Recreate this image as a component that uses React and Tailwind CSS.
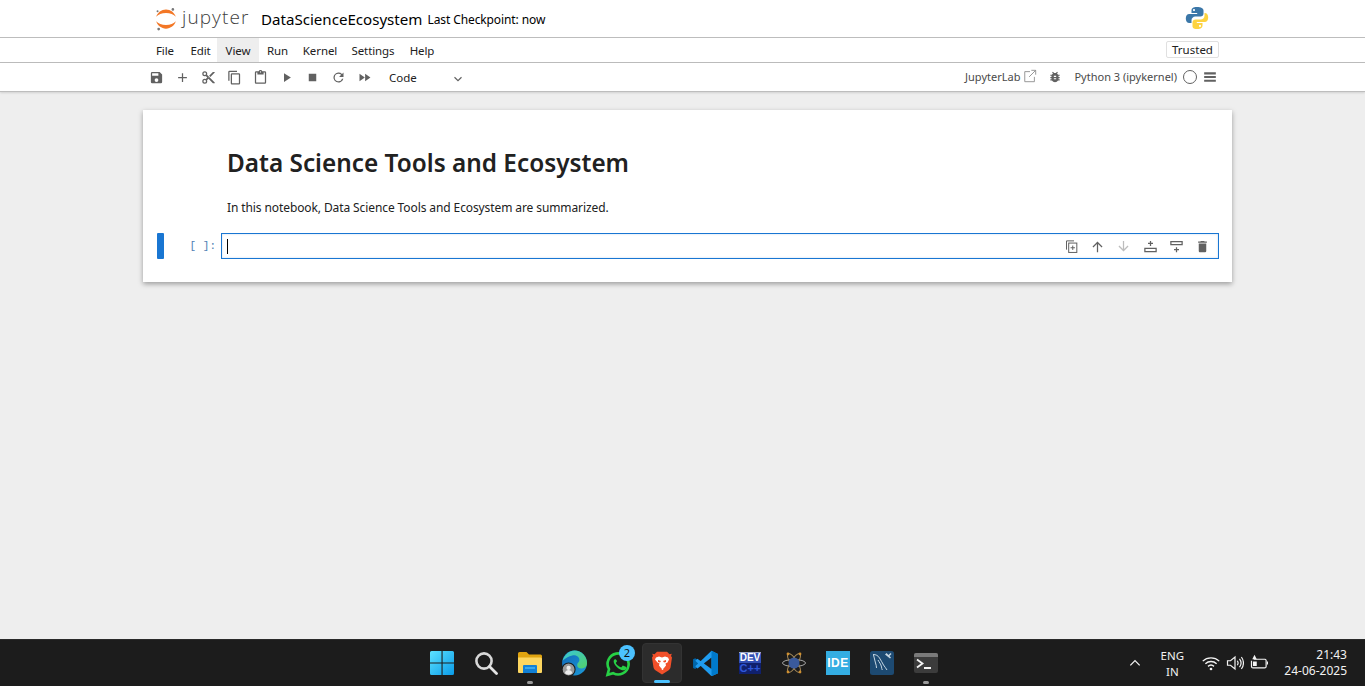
import React from "react";

const ui = { fontFamily: '"Noto Sans", "Open Sans", sans-serif' };

const Ic = ({ w = 16, h = 16, vb = "0 0 24 24", className = "", children }) => (
  <svg width={w} height={h} viewBox={vb} className={`shrink-0 ${className}`}>{children}</svg>
);

const toolIcons = [
  <path fill="#616161" d="M17 3H5a2 2 0 0 0-2 2v14a2 2 0 0 0 2 2h14a2 2 0 0 0 2-2V7l-4-4zm-5 16a3 3 0 1 1 0-6 3 3 0 0 1 0 6zm3-10H5V5h10v4z" />,
  <path fill="#616161" d="M19 13h-6v6h-2v-6H5v-2h6V5h2v6h6v2z" />,
  <path fill="#616161" d="M9.64 7.64A3.9 3.9 0 0 0 10 6a4 4 0 1 0-4 4c.59 0 1.14-.13 1.64-.36L10 12l-2.36 2.36A3.9 3.9 0 0 0 6 14a4 4 0 1 0 4 4c0-.59-.13-1.14-.36-1.64L12 14l7 7h3v-1L9.64 7.64zM6 8a2 2 0 1 1 0-4 2 2 0 0 1 0 4zm0 12a2 2 0 1 1 0-4 2 2 0 0 1 0 4zm6-7.5a.5.5 0 1 1 0-1 .5.5 0 0 1 0 1zM19 3l-6 6 2 2 7-7V3h-3z" />,
  <path fill="#616161" d="M16 1H4a2 2 0 0 0-2 2v14h2V3h12V1zm3 4H8a2 2 0 0 0-2 2v14c0 1.1.9 2 2 2h11a2 2 0 0 0 2-2V7a2 2 0 0 0-2-2zm0 16H8V7h11v14z" />,
  <path fill="#616161" d="M19 2h-4.18C14.4.84 13.3 0 12 0S9.6.84 9.18 2H5a2 2 0 0 0-2 2v16c0 1.1.9 2 2 2h14a2 2 0 0 0 2-2V4a2 2 0 0 0-2-2zm-7 0a1 1 0 1 1 0 2 1 1 0 0 1 0-2zm7 18H5V4h2v3h10V4h2v16z" />,
  <path fill="#616161" d="M8 5v14l11-7z" />,
  <path fill="#616161" d="M6 6h12v12H6z" />,
  <path fill="#616161" d="M17.65 6.35A8 8 0 1 0 19.73 14h-2.08A6 6 0 1 1 12 6c1.66 0 3.14.69 4.22 1.78L13 11h7V4l-2.35 2.35z" />,
  <path fill="#616161" d="M4 18l8.5-6L4 6v12zm9-12v12l8.5-6L13 6z" />,
];

const cellIcons = [
  <g key="dup" fill="none" stroke="#616161" strokeWidth="1.6"><path d="M16 3H4v14" /><rect x="7.5" y="6.5" width="13" height="15" /><path d="M14 10.500v7M10.500 14h7" /></g>,
  <path key="up" fill="#616161" d="M4 12l1.41 1.41L11 7.83V21h2V7.83l5.58 5.59L20 12l-8-8z" />,
  <path key="down" fill="#bdbdbd" d="M20 12l-1.41-1.41L13 16.17V3h-2v13.17l-5.58-5.59L4 12l8 8z" />,
  <g key="ia" fill="#616161"><path d="M2 14h20v7H2zm2 2v3h16v-3z" fillRule="evenodd" /><path d="M11 3h2v3h3v2h-3v3h-2V8H8V6h3z" /></g>,
  <g key="ib" fill="#616161"><path d="M2 3h20v7H2zm2 2v3h16V5z" fillRule="evenodd" /><path d="M11 13h2v3h3v2h-3v3h-2v-3H8v-2h3z" /></g>,
  <path key="del" fill="#616161" d="M6 19c0 1.1.9 2 2 2h8a2 2 0 0 0 2-2V7H6v12zM19 4h-3.5l-1-1h-5l-1 1H5v2h14V4z" />,
];

const menu = [
  ["File", "w-[38px]"], ["Edit", "w-[33px]"], ["View", "w-[42px] bg-[#eeeeee]"], ["Run", "w-[37px]"],
  ["Kernel", "w-[48px]"], ["Settings", "w-[58px]"], ["Help", "w-[40px]"],
];

const Win = () => (
  <Ic w={24} h={24}>
    <defs><linearGradient id="wg" x1="0" y1="0" x2="1" y2="1"><stop offset="0" stopColor="#5de2ff" /><stop offset="1" stopColor="#0a9be8" /></linearGradient></defs>
    <path fill="url(#wg)" d="M0 1.500A1.500 1.500 0 0 1 1.500 0h10v11.400H0zM12.600 0h9.900A1.500 1.500 0 0 1 24 1.500v9.900H12.600zM0 12.600h11.500V24h-10A1.500 1.500 0 0 1 0 22.500zM12.600 12.600H24v9.900a1.500 1.500 0 0 1-1.500 1.500h-9.900z" />
  </Ic>
);

const Search = () => (
  <Ic w={24} h={24}><circle cx="10" cy="10" r="7.600" fill="none" stroke="#d8d8d8" strokeWidth="2.600" /><path d="M15.500 15.500L22.500 22.500" stroke="#e4e4e4" strokeWidth="2.800" strokeLinecap="round" /></Ic>
);

const Folder = () => (
  <Ic w={24} h={24}>
    <path fill="#e0a410" d="M0 2.500A1.500 1.500 0 0 1 1.500 1h7L11 3.500h11.500A1.500 1.500 0 0 1 24 5v4H0z" />
    <path fill="#fcd660" d="M0 6.500h22.500A1.500 1.500 0 0 1 24 8v13a1 1 0 0 1-1 1H1a1 1 0 0 1-1-1z" />
    <path fill="#1180d6" d="M5 15a1 1 0 0 1 1-1h12a1 1 0 0 1 1 1v7H5z" />
    <path fill="#38a8ee" d="M7 16h10v2H7z" />
  </Ic>
);

const Edge = () => (
  <Ic w={26} h={26}>
    <defs>
      <linearGradient id="eg1" x1="0" y1="0" x2="1" y2="1"><stop offset="0" stopColor="#39c6d8" /><stop offset="1" stopColor="#52d06a" /></linearGradient>
      <linearGradient id="eg2" x1="0" y1="0" x2="1" y2="1"><stop offset="0" stopColor="#1166b8" /><stop offset="1" stopColor="#1d9bd8" /></linearGradient>
    </defs>
    <circle cx="12.500" cy="12" r="11.500" fill="url(#eg2)" />
    <path fill="url(#eg1)" d="M1.500 10C3 4 8 .5 12.500.5 19 .5 24 6 24 12c0 3-2 5-5 5s-4-1.500-4-3c0-2.500 2-2.500 2-5 0-2.500-3-4.500-6.500-4C7 5.500 4 7.500 1.500 10z" />
    <circle cx="7" cy="18" r="6" fill="#9a9a9a" stroke="#1b1b1b" />
    <circle cx="7" cy="16.500" r="2" fill="#ececec" />
    <path fill="#ececec" d="M3.500 21.500c.5-2 2-3 3.500-3s3 1 3.500 3a6 6 0 0 1-7 0z" />
  </Ic>
);

const WhatsApp = () => (
  <div className="relative w-[28px] h-[26px]">
    <Ic w={26} h={26} className="mt-[1px]">
      <path fill="none" stroke="#27d045" strokeWidth="2.400" d="M2.300 22l1.400-5.200A9.700 9.700 0 1 1 7.500 20.500z" />
      <path fill="#27d045" d="M9.200 7.500c-.4 0-1.200.6-1.200 2s1 2.900 1.200 3.100c.2.300 2.100 3.200 5 4.400 2.400 1 3 .8 3.500.7.600-.1 1.700-.7 2-1.400.2-.6.200-1.200.1-1.300-.1-.1-.3-.2-.6-.4l-2.300-1.100c-.3-.1-.5-.2-.7.100l-1 1.300c-.2.200-.4.200-.7.100-.3-.2-1.400-.5-2.600-1.600-1-.8-1.600-1.900-1.800-2.200-.2-.3 0-.5.100-.6l.8-1c.1-.2.100-.4 0-.6L10.200 8c-.2-.5-.5-.5-.7-.5z" />
    </Ic>
    <span className="absolute left-[14px] top-[-5px] w-[16px] h-[16px] rounded-full bg-[#4cc2ff] text-[#111] text-[11px] leading-[16px] text-center" style={ui}>2</span>
  </div>
);

const Brave = () => (
  <Ic w={22} h={24} vb="0 0 22 24">
    <path fill="#f1502a" d="M6 .8h10l2.500 2.400 2.300-.5L20 5l1 1.500-1.500 10c-.2 1-.7 1.800-1.500 2.400L11 23.500 4 18.900c-.8-.6-1.300-1.400-1.500-2.400L1 6.500 2 5 1.200 2.700l2.300.5z" />
    <path fill="#fff" d="M5 6.500l3-1 3 1 3-1 3 1 1 2-1.500 3-2 1 .5 2-2 2.500-1 1 .5.500-1 .500-1-.500.500-.500-1-1-2-2.500.5-2-2-1L4 8.500z" />
    <path fill="#f1502a" d="M7 9l3 1-1 1.500-2-.5zM15 9l-3 1 1 1.500 2-.5z" />
  </Ic>
);

const VSCode = () => (
  <Ic w={26} h={26}>
    <path fill="#0065a9" d="M1 8.500l2-1 6 4.500L3 17.500l-2-1z" />
    <path fill="#1f9cf0" d="M18 .8l6 2.800v17.800l-6 2.800L3 10l2-2 13 9.500V7L5 17 3 15z" />
    <path fill="#007acc" d="M18 .8l6 2.800v17.800l-6 2.800z" />
  </Ic>
);

const Dev = () => (
  <div className="w-[22px] h-[22px] bg-[#1f3b9c] flex flex-col items-center overflow-hidden border-t-[1px] border-[#9aa6c8]" style={{ fontFamily: '"Liberation Sans", sans-serif' }}>
    <span className="text-white text-[10px] leading-[10px] font-bold bg-[#3350b4] w-full text-center">DEV</span>
    <span className="text-[#2f57d8] bg-[#10206c] text-[11px] leading-[11px] font-bold w-full text-center">C++</span>
  </div>
);

const Atom = () => (
  <Ic w={24} h={24}>
    <g fill="none" stroke="#a8a8a8" strokeWidth="1">
      <ellipse cx="12" cy="12" rx="11.500" ry="3.500" />
      <ellipse cx="12" cy="12" rx="11" ry="3.500" transform="rotate(58 12 12)" stroke="#a08658" />
      <ellipse cx="12" cy="12" rx="11" ry="3.500" transform="rotate(-58 12 12)" stroke="#a08658" />
    </g>
    <circle cx="12" cy="12" r="5.500" fill="#3a5a9c" />
    <circle cx="6" cy="3" r="1.400" fill="#d09030" />
    <circle cx="18" cy="3" r="1.400" fill="#d09030" />
    <circle cx="6" cy="21" r="1.400" fill="#d09030" />
    <circle cx="18" cy="21" r="1.400" fill="#d09030" />
  </Ic>
);

const Ide = () => (
  <div className="w-[24px] h-[24px] bg-[#34ade2] flex items-center justify-center text-white text-[12px] font-bold tracking-[0.5px]" style={{ fontFamily: '"Liberation Sans", sans-serif' }}>IDE</div>
);

const Workbench = () => (
  <Ic w={24} h={24}>
    <rect x="0" y="0" width="24" height="24" rx="2.500" fill="#1d4a72" />
    <path fill="none" stroke="#c6d6e2" strokeWidth="1" d="M3 3.500c3 0 5 1 6.500 3.500 1.500 2.500 3 5 4 7 .8 1.500 2.500 3 3.500 5M3.500 4c1 3 1 5 2 8 .5 1.500 1 3 1 5M8 9c1 2 3 4 3.500 7 .2 1 .2 2 .8 3" />
    <path fill="#c6d6e2" d="M16.500 2l2 2 2-2 1 1-2 2 1.500 1.500-1 1-5-4z" />
  </Ic>
);

const Terminal = () => (
  <div className="w-[24px] h-[20px] rounded-[2px] bg-[#3c3c3c] overflow-hidden flex flex-col">
    <div className="h-[4px] bg-[#7a7a7a]" />
    <Ic w={24} h={16} vb="0 0 24 16">
      <path d="M3 2.500L8.500 6.500 3 10.500" fill="none" stroke="#f4f4f4" strokeWidth="1.800" />
      <path d="M10 11h7" stroke="#f4f4f4" strokeWidth="1.800" />
    </Ic>
  </div>
);

const taskbar = [
  { el: <Win />, w: "w-[44px]" },
  { el: <Search />, w: "w-[44px]" },
  { el: <Folder />, w: "w-[44px]", dot: true },
  { el: <Edge />, w: "w-[44px]" },
  { el: <WhatsApp />, w: "w-[46px]" },
  { el: <Brave />, w: "w-[40px]", active: true },
  { el: <VSCode />, w: "w-[46px]" },
  { el: <Dev />, w: "w-[44px]" },
  { el: <Atom />, w: "w-[44px]" },
  { el: <Ide />, w: "w-[44px]" },
  { el: <Workbench />, w: "w-[44px]" },
  { el: <Terminal />, w: "w-[44px]", dot: true },
];

export default function App() {
  return (
    <div className="w-[1365px] h-[686px] overflow-hidden flex flex-col bg-[#eeeeee]" style={ui}>
      {/* header */}
      <header className="h-[38px] bg-white border-b border-[#bdbdbd] flex items-center pl-[155px] pr-[156px] shrink-0">
        <svg width="22" height="26" viewBox="0 0 24 26" className="shrink-0 mr-[3px]">
          <path fill="#f37726" d="M12 19.500c-4.600 0-8.600-1.600-10.700-4C2.700 20 7 23.500 12 23.500s9.300-3.500 10.700-8c-2.100 2.400-6.100 4-10.700 4z" />
          <path fill="#f37726" d="M12 6.500c4.600 0 8.600 1.600 10.700 4C21.300 6 17 2.500 12 2.500S2.700 6 1.300 10.500c2.100-2.400 6.100-4 10.700-4z" />
          <circle cx="19.500" cy="2.500" r="1.400" fill="#767677" />
          <circle cx="2.800" cy="4.500" r="1.100" fill="#767677" />
          <circle cx="4" cy="24" r="1.500" fill="#767677" />
        </svg>
        <span className="text-[19px] leading-[26px] font-light text-[#3e3e3e] tracking-[1.100px] mt-[-3px] ml-[2px] w-[79px]" style={{ fontFamily: '"Open Sans", sans-serif' }}>jupyter</span>
        <span className="text-[15.100px] text-black mt-[2px]">DataScienceEcosystem</span>
        <span className="text-[12px] tracking-[-0.1px] text-black ml-[5px] mt-[2px]">Last Checkpoint: now</span>
        <svg width="24" height="24" viewBox="0 0 24 24" className="ml-auto mb-[2px] mr-[0px]">
          <path fill="#3b77a8" d="M11.900 1C8 1 6.500 2.500 6.500 4.500V7h5.700v1H4.300C2 8 .800 9.800.800 12.500S2 17 4.300 17h2.200v-2.700c0-2 1.700-3.800 3.800-3.800h5.200c1.700 0 3-1.300 3-3V4.500C18.500 2.500 16 1 11.900 1zM9 3a1.100 1.100 0 1 1 0 2.200A1.100 1.100 0 0 1 9 3z" />
          <path fill="#fdd340" d="M12.100 23c3.900 0 5.400-1.500 5.400-3.500V17h-5.700v-1h7.900c2.300 0 3.500-1.800 3.500-4.500S22 7 19.700 7h-.2v2.700c0 2-1.700 3.800-3.800 3.800h-5.200c-1.700 0-3 1.300-3 3v3C7.500 21.500 8 23 12.100 23zm2.900-2a1.100 1.100 0 1 1 0-2.200 1.100 1.100 0 0 1 0 2.200z" />
        </svg>
      </header>

      {/* menu */}
      <nav className="h-[25px] bg-white border-b border-[#bdbdbd] flex items-stretch pl-[146px] pr-[146px] shrink-0">
        {menu.map(([m, c]) => (
          <span key={m} className={`${c} h-[24px] pt-[1px] flex items-center justify-center text-[11.500px] tracking-[-0.1px] text-[#212121]`}>{m}</span>
        ))}
        <span className="ml-auto self-center mb-[1px] w-[53px] h-[17px] border border-[#e0e0e0] rounded-[2px] flex items-center justify-center text-[11.500px] text-[#212121]">Trusted</span>
      </nav>

      {/* toolbar */}
      <div className="h-[29px] bg-white border-b border-[#bdbdbd] flex items-center pl-[143px] pr-[148px] shrink-0 shadow-[0_1px_2px_rgba(0,0,0,0.12)] z-10">
        {toolIcons.map((t, i) => (
          <span key={i} className="w-[26px] flex justify-center"><Ic w={15} h={15}>{t}</Ic></span>
        ))}
        <span className="text-[11.500px] pt-[1px] text-[#212121] ml-[12px] w-[62px]">Code</span>
        <Ic w={14} h={14} className="mt-[3px]"><path fill="none" stroke="#616161" strokeWidth="2" d="M6 9l6 6 6-6" /></Ic>
        <span className="ml-auto text-[11px] pt-[1px] text-[#4a4a4a]">JupyterLab</span>
        <Ic w={14} h={14} className="ml-[3px] mb-[2px]" vb="0 0 16 16"><path fill="none" stroke="#8a8a8a" strokeWidth="1" d="M8 3H2v11.500h11V9M9.500 1.500h5v5M14.500 1.500L7 9" /></Ic>
        <Ic w={14} h={14} className="ml-[11px]"><path fill="#616161" d="M20 8h-2.810a5.985 5.985 0 0 0-1.820-1.960L17 4.410 15.590 3l-2.170 2.170a6 6 0 0 0-2.830 0L8.410 3 7 4.410l1.620 1.630C7.880 6.550 7.260 7.220 6.810 8H4v2h2.090c-.05.330-.09.660-.09 1v1H4v2h2v1c0 .340.040.670.090 1H4v2h2.810a6 6 0 0 0 10.380 0H20v-2h-2.090c.05-.330.090-.660.090-1v-1h2v-2h-2v-1c0-.340-.040-.670-.090-1H20V8zm-6 8h-4v-2h4v2zm0-4h-4v-2h4v2z" /></Ic>
        <span className="ml-[12px] text-[11px] pt-[1px] text-[#4a4a4a]">Python 3 (ipykernel)</span>
        <span className="ml-[6px] w-[14px] h-[14px] rounded-full border border-[#616161]" />
        <Ic w={14} h={14} className="ml-[6px]"><path fill="#616161" d="M2 4h20v3.500H2zM2 10.250h20v3.500H2zM2 16.500h20V20H2z" /></Ic>
      </div>

      {/* main */}
      <main className="flex-1 min-h-0 px-[133px] pt-[18px] bg-[#eeeeee]">
        <section className="ml-[10px] w-[1089px] h-[172px] bg-white shadow-[0_2px_5px_rgba(0,0,0,0.35)] flex flex-col">
          <h1 className="mt-[36px] ml-[84px] text-[24.350px] leading-[34px] font-semibold text-[#212121]">Data Science Tools and Ecosystem</h1>
          <p className="mt-[19px] ml-[84px] text-[12px] tracking-[-0.1px] leading-[17px] text-[#212121]">In this notebook, Data Science Tools and Ecosystem are summarized.</p>
          <div className="mt-[17px] flex items-stretch h-[26px] pl-[14px] pr-[13px]">
            <div className="w-[7px] rounded-[1px] bg-[#1976d2]" />
            <div className="w-[57px] pt-[1px] flex items-center justify-end pr-[5px] text-[11px] text-[#4f7fb3]" style={{ fontFamily: '"Liberation Mono", monospace' }}>[ ]:</div>
            <div className="flex-1 border border-[#1976d2] shadow-[inset_0_0_2px_rgba(25,118,210,0.3)] flex items-center pl-[5px] pr-[2px]">
              <div className="w-[1px] h-[15px] bg-black" />
              <div className="ml-auto flex items-center">
                {cellIcons.map((c, i) => (
                  <span key={i} className="w-[26.300px] flex justify-center"><Ic w={15} h={15}>{c}</Ic></span>
                ))}
              </div>
            </div>
          </div>
        </section>
      </main>

      {/* taskbar */}
      <footer className="h-[47px] bg-[#1c1c1c] border-t border-[#2a2a2a] flex items-center relative shrink-0">
        <div className="ml-[420px] flex items-center h-full">
          {taskbar.map((t, i) => (
            <div key={i} className={`${t.w} h-[40px] flex items-center justify-center relative ${t.active ? "bg-[#2c2c2c] rounded-[4px] border border-[#333333]" : ""}`}>
              {t.el}
              {t.dot && <span className="absolute bottom-[-1px] left-1/2 -translate-x-1/2 w-[6px] h-[3px] rounded-full bg-[#9a9a9a]" />}
              {t.active && <span className="absolute bottom-[-1px] left-1/2 -translate-x-1/2 w-[16px] h-[3px] rounded-full bg-[#4cc2ff]" />}
            </div>
          ))}
        </div>
        <div className="ml-auto flex items-center text-[#f2f2f2] text-[12px] h-full">
          <Ic w={14} h={14} className="mr-[10px]"><path fill="none" stroke="#f2f2f2" strokeWidth="2.200" d="M4 16l8-8 8 8" /></Ic>
          <div className="w-[40px] flex flex-col items-center leading-[16px] text-[11.500px] pt-[1px]"><span>ENG</span><span>IN</span></div>
          <Ic w={18} h={18} className="ml-[10px]">
            <g fill="none" stroke="#f2f2f2" strokeWidth="1.800"><path d="M1 9.500a16 16 0 0 1 22 0" /><path d="M4.500 13a11 11 0 0 1 15 0" /><path d="M8 16.500a6 6 0 0 1 8 0" /></g><circle cx="12" cy="20" r="1.800" fill="#f2f2f2" />
          </Ic>
          <Ic w={18} h={18} className="ml-[6px]">
            <path fill="none" stroke="#f2f2f2" strokeWidth="1.600" d="M2 9v6h4l6 5V4L6 9z" /><path fill="none" stroke="#f2f2f2" strokeWidth="1.600" d="M15 9a5 5 0 0 1 0 6M18 6.500a9 9 0 0 1 0 11M20.500 4a13 13 0 0 1 0 16" />
          </Ic>
          <Ic w={18} h={18} className="ml-[6px]">
            <path fill="none" stroke="#f2f2f2" strokeWidth="1.600" d="M5 7h15a2 2 0 0 1 1.500 1.500v8a2 2 0 0 1-2 2H4a2 2 0 0 1-2-2V9" /><path fill="#f2f2f2" d="M22.500 10H24v4h-1.500zM4 10h5v6H4zM6 1L3 7h6z" />
          </Ic>
          <div className="ml-[16px] mr-[18px] flex flex-col items-end leading-[16px]"><span>21:43</span><span>24-06-2025</span></div>
        </div>
      </footer>
    </div>
  );
}
